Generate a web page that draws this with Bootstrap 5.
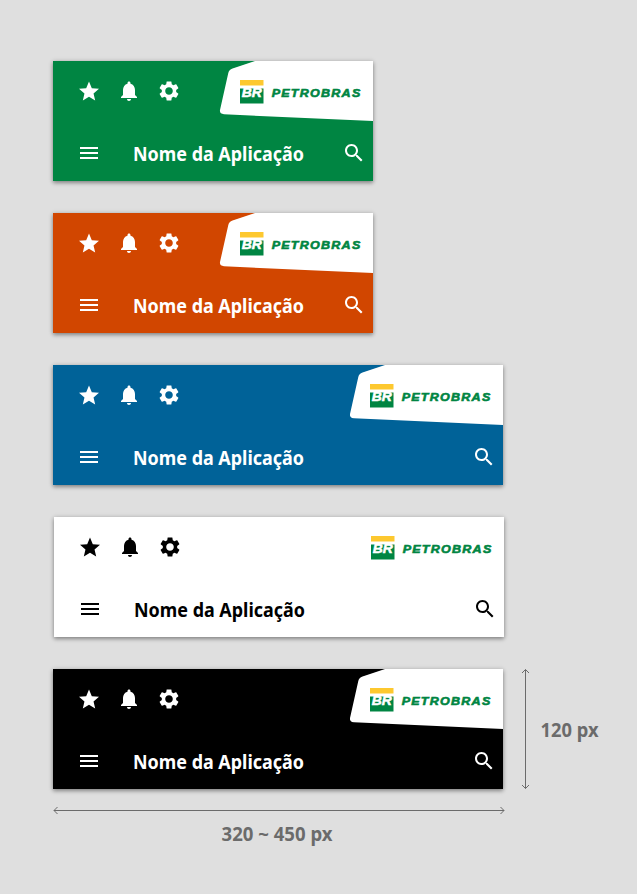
<!DOCTYPE html>
<html lang="pt-BR">
<head>
<meta charset="utf-8">
<meta name="viewport" content="width=device-width, initial-scale=1">
<title>Cabeçalho</title>
<link href="https://cdn.jsdelivr.net/npm/bootstrap@5.3.0/dist/css/bootstrap.min.css" rel="stylesheet">
<style>
body{background:#dfdfdf;font-family:"Noto Sans","Open Sans",sans-serif;width:637px;height:894px;overflow:hidden}
.board{padding:61px 0 0 53px}
.stack-bars{gap:32px}
.app-bar{height:120px;box-shadow:0 2px 4px rgba(0,0,0,.36),0 0 5px rgba(0,0,0,.13);color:#fff}
.w-320{width:320px}.w-450{width:450px}
.bg-green{background:#008542}.bg-orange{background:#d14600}.bg-blue{background:#006298}
.bg-plain{background:#fff;color:#000;margin-left:1px}.bg-ink{background:#000}
.bar-half{height:60px}
.tools{gap:16px;padding:18px 0 0 24px}
.bar-main{padding:20px 7.5px 0 24px}
.app-title{margin-left:32px}
.app-title text,.measure text{font-family:"Noto Sans",sans-serif;font-weight:700;font-size:20px}
svg{display:block;flex:none;overflow:visible}
.measure{color:#6b6b6b}
.measure-v{margin-left:18px}
.measure-h{margin-top:16px}
</style>
<script src="https://cdn.jsdelivr.net/npm/bootstrap@5.3.0/dist/js/bootstrap.bundle.min.js"></script>
</head>
<body>
<svg width="0" height="0" class="position-absolute" aria-hidden="true">
<defs>
<symbol id="star" viewBox="0 0 24 24"><path d="M12 17.77 18.18 21.5l-1.64-7.03L22 9.74l-7.19-.61L12 2.5 9.19 9.13 2 9.74l5.46 4.73L5.82 21.5z"/></symbol>
<symbol id="bell" viewBox="0 0 24 24"><path d="M12 22c1.1 0 2-.9 2-2h-4c0 1.1.89 2 2 2zm6-6v-5c0-3.07-1.64-5.64-4.5-6.32V4c0-.83-.67-1.5-1.5-1.5s-1.5.67-1.5 1.5v.68C7.63 5.36 6 7.92 6 11v5l-2 2v1h16v-1l-2-2z"/></symbol>
<symbol id="gear" viewBox="0 0 24 24"><path d="M19.14 12.94c.04-.3.06-.61.06-.94 0-.32-.02-.64-.07-.94l2.03-1.58c.18-.14.23-.41.12-.61l-1.92-3.32c-.12-.22-.37-.29-.59-.22l-2.39.96c-.5-.38-1.03-.7-1.62-.94l-.36-2.54c-.04-.24-.24-.41-.48-.41h-3.84c-.24 0-.43.17-.47.41l-.36 2.54c-.59.24-1.13.57-1.62.94l-2.39-.96c-.22-.08-.47 0-.59.22L2.74 8.87c-.12.21-.08.47.12.61l2.03 1.58c-.05.3-.09.63-.09.94s.02.64.07.94l-2.03 1.58c-.18.14-.23.41-.12.61l1.92 3.32c.12.22.37.29.59.22l2.39-.96c.5.38 1.03.7 1.62.94l.36 2.54c.05.24.24.41.48.41h3.84c.24 0 .44-.17.47-.41l.36-2.54c.59-.24 1.13-.56 1.62-.94l2.39.96c.22.08.47 0 .59-.22l1.92-3.32c.12-.22.07-.47-.12-.61l-2.01-1.58zM12 15.800c-2.100 0-3.800-1.700-3.800-3.800s1.700-3.800 3.800-3.800 3.800 1.700 3.800 3.800-1.700 3.800-3.800 3.800z"/></symbol>
<symbol id="menu" viewBox="0 0 24 24"><path d="M3 18h18v-2H3v2zm0-5h18v-2H3v2zm0-7v2h18V6H3z"/></symbol>
<symbol id="search" viewBox="0 0 24 24"><path d="M15.5 14h-.79l-.28-.27C15.41 12.59 16 11.11 16 9.5 16 5.91 13.09 3 9.5 3S3 5.91 3 9.5 5.91 16 9.5 16c1.61 0 3.09-.59 4.23-1.57l.27.28v.79l5 4.99L20.49 19l-4.99-5zm-6 0C7.01 14 5 11.99 5 9.5S7.01 5 9.5 5 14 7.01 14 9.5 11.99 14 9.5 14z"/></symbol>
<symbol id="brand" viewBox="0 0 154 60">
<path fill="#fff" d="M36 0 13.500 7.500Q10 8.700 9.300 12L1 49Q.4 53 5 53.300L154 60V0z"/>
<path fill="#fdc82f" d="M21 19h23.500v5.500H21z"/>
<path fill="#008542" d="M21 27.500h23.500v15H21z"/>
<g font-family="Liberation Sans, Arial, sans-serif" font-weight="700" font-style="italic">
<text x="22.800" y="36.400" font-size="12.900" fill="#fff" stroke="#fff" stroke-width=".5" textLength="20" lengthAdjust="spacingAndGlyphs">BR</text>
<text transform="translate(52.700 36) scale(1.100 1)" font-size="11.400" fill="#008542" stroke="#008542" stroke-width=".6" textLength="80.500" lengthAdjust="spacing">PETROBRAS</text>
</g></symbol>
</defs>
</svg>
<main class="board">
<div class="d-flex flex-column align-items-start stack-bars">

<header class="app-bar w-320 bg-green">
<div class="bar-half d-flex justify-content-between"><div class="tools d-flex"><svg width="24" height="24" fill="currentColor"><use href="#star"/></svg><svg width="24" height="24" fill="currentColor"><use href="#bell"/></svg><svg width="24" height="24" fill="currentColor"><use href="#gear"/></svg></div><svg width="154" height="60"><use href="#brand"/></svg></div>
<div class="bar-half bar-main d-flex align-items-start"><svg width="24" height="24" fill="currentColor"><use href="#menu"/></svg><div class="app-title"><svg width="176" height="32" fill="currentColor"><text x="0" y="20" textLength="171" lengthAdjust="spacingAndGlyphs">Nome da Aplicação</text></svg></div><svg class="ms-auto" width="24" height="24" fill="currentColor"><use href="#search"/></svg></div>
</header>

<header class="app-bar w-320 bg-orange">
<div class="bar-half d-flex justify-content-between"><div class="tools d-flex"><svg width="24" height="24" fill="currentColor"><use href="#star"/></svg><svg width="24" height="24" fill="currentColor"><use href="#bell"/></svg><svg width="24" height="24" fill="currentColor"><use href="#gear"/></svg></div><svg width="154" height="60"><use href="#brand"/></svg></div>
<div class="bar-half bar-main d-flex align-items-start"><svg width="24" height="24" fill="currentColor"><use href="#menu"/></svg><div class="app-title"><svg width="176" height="32" fill="currentColor"><text x="0" y="20" textLength="171" lengthAdjust="spacingAndGlyphs">Nome da Aplicação</text></svg></div><svg class="ms-auto" width="24" height="24" fill="currentColor"><use href="#search"/></svg></div>
</header>

<header class="app-bar w-450 bg-blue">
<div class="bar-half d-flex justify-content-between"><div class="tools d-flex"><svg width="24" height="24" fill="currentColor"><use href="#star"/></svg><svg width="24" height="24" fill="currentColor"><use href="#bell"/></svg><svg width="24" height="24" fill="currentColor"><use href="#gear"/></svg></div><svg width="154" height="60"><use href="#brand"/></svg></div>
<div class="bar-half bar-main d-flex align-items-start"><svg width="24" height="24" fill="currentColor"><use href="#menu"/></svg><div class="app-title"><svg width="176" height="32" fill="currentColor"><text x="0" y="20" textLength="171" lengthAdjust="spacingAndGlyphs">Nome da Aplicação</text></svg></div><svg class="ms-auto" width="24" height="24" fill="currentColor"><use href="#search"/></svg></div>
</header>

<header class="app-bar w-450 bg-plain">
<div class="bar-half d-flex justify-content-between"><div class="tools d-flex"><svg width="24" height="24" fill="currentColor"><use href="#star"/></svg><svg width="24" height="24" fill="currentColor"><use href="#bell"/></svg><svg width="24" height="24" fill="currentColor"><use href="#gear"/></svg></div><svg width="154" height="60"><use href="#brand"/></svg></div>
<div class="bar-half bar-main d-flex align-items-start"><svg width="24" height="24" fill="currentColor"><use href="#menu"/></svg><div class="app-title"><svg width="176" height="32" fill="currentColor"><text x="0" y="20" textLength="171" lengthAdjust="spacingAndGlyphs">Nome da Aplicação</text></svg></div><svg class="ms-auto" width="24" height="24" fill="currentColor"><use href="#search"/></svg></div>
</header>

<div class="d-flex">
<header class="app-bar w-450 bg-ink">
<div class="bar-half d-flex justify-content-between"><div class="tools d-flex"><svg width="24" height="24" fill="currentColor"><use href="#star"/></svg><svg width="24" height="24" fill="currentColor"><use href="#bell"/></svg><svg width="24" height="24" fill="currentColor"><use href="#gear"/></svg></div><svg width="154" height="60"><use href="#brand"/></svg></div>
<div class="bar-half bar-main d-flex align-items-start"><svg width="24" height="24" fill="currentColor"><use href="#menu"/></svg><div class="app-title"><svg width="176" height="32" fill="currentColor"><text x="0" y="20" textLength="171" lengthAdjust="spacingAndGlyphs">Nome da Aplicação</text></svg></div><svg class="ms-auto" width="24" height="24" fill="currentColor"><use href="#search"/></svg></div>
</header>
<div class="measure measure-v"><svg width="80" height="121"><path d="M4.500.500v119M1 4 4.500.500 8 4M1 116l3.500 3.500L8 116" fill="none" stroke="currentColor"/><text x="19.500" y="68" fill="currentColor" textLength="58" lengthAdjust="spacingAndGlyphs">120 px</text></svg></div>
</div>
</div>
<div class="measure measure-h"><svg width="452" height="45"><path d="M1 4.500h450M4.500 1 1 4.500 4.500 8M447.500 1l3.500 3.500-3.500 3.500" fill="none" stroke="currentColor"/><text x="168.500" y="35" fill="currentColor" textLength="111" lengthAdjust="spacingAndGlyphs">320 ~ 450 px</text></svg></div>
</main>
</body>
</html>
